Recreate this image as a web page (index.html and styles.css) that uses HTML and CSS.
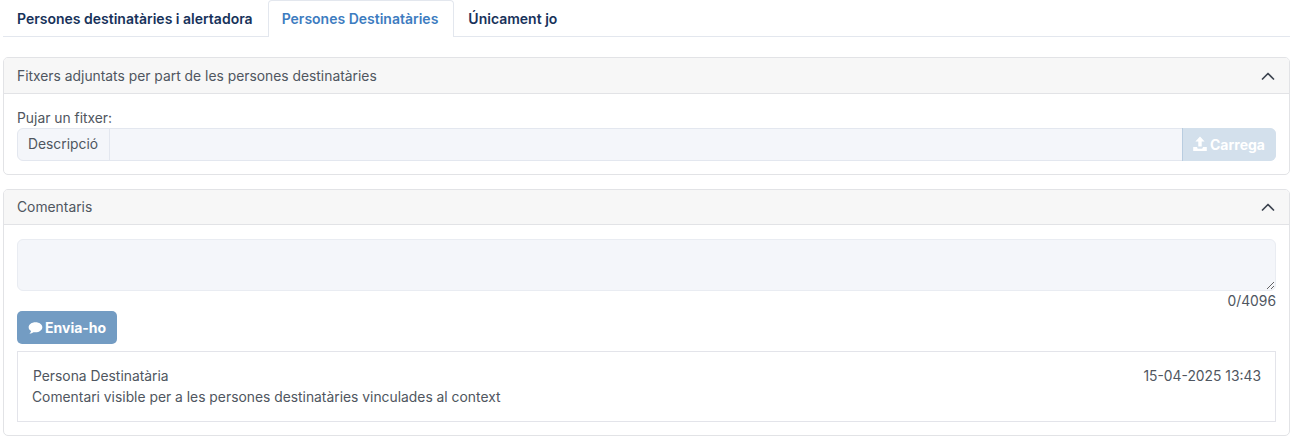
FILE: index.html
```html
<!DOCTYPE html>
<html lang="ca">
<head>
<meta charset="utf-8">
<title>Comentaris</title>
<link rel="stylesheet" href="styles.css">
</head>
<body>
<nav class="tabs">
  <a class="tab">Persones destinatàries i alertadora</a>
  <a class="tab active">Persones Destinatàries</a>
  <a class="tab">Únicament jo</a>
</nav>
<section class="card card-files">
  <header class="card-head">
    <span>Fitxers adjuntats per part de les persones destinatàries</span>
    <svg class="chev" viewBox="0 0 14 8" width="14" height="8"><path d="M1.5 7 7 1.5 12.5 7" fill="none" stroke="#3d4450" stroke-width="1.7" stroke-linecap="round" stroke-linejoin="round"/></svg>
  </header>
  <div class="card-body">
    <label class="upload-label">Pujar un fitxer:</label>
    <div class="input-group">
      <span class="addon">Descripció</span>
      <span class="field"></span>
      <button class="btn-upload">
        <svg viewBox="0 0 16 16" width="16" height="16"><path fill="#fff" d="M8 .6 12.6 5.6H9.7V10.5H6.3V5.6H3.4ZM1.2 11H5.2V11.8C5.2 12.3 5.6 12.7 6.1 12.7H9.9C10.4 12.7 10.8 12.3 10.8 11.8V11H14.8V15H1.2Z"/></svg>
        Carrega
      </button>
    </div>
  </div>
</section>
<section class="card card-comments">
  <header class="card-head">
    <span>Comentaris</span>
    <svg class="chev" viewBox="0 0 14 8" width="14" height="8"><path d="M1.5 7 7 1.5 12.5 7" fill="none" stroke="#3d4450" stroke-width="1.7" stroke-linecap="round" stroke-linejoin="round"/></svg>
  </header>
  <div class="card-body comments-body">
    <textarea class="comment-input"></textarea>
    <div class="counter">0/4096</div>
    <button class="btn-send">
      <svg viewBox="0 0 16 14" width="15" height="14"><path fill="#fff" d="M8 .8C3.9.8.7 3.2.7 6.2c0 1.7 1 3.1 2.6 4.1-.2 1-.8 1.9-1.7 2.7 1.6-.1 3.1-.7 4.2-1.6.7.1 1.4.2 2.2.2 4.1 0 7.3-2.4 7.3-5.4S12.1.8 8 .8Z"/></svg>
      Envia-ho
    </button>
    <article class="comment">
      <div class="comment-meta">
        <span class="author">Persona Destinatària</span>
        <span>15-04-2025 13:43</span>
      </div>
      <p class="comment-text">Comentari visible per a les persones destinatàries vinculades al context</p>
    </article>
  </div>
</section>
</body>
</html>
```
FILE: styles.css
```css
* { box-sizing: border-box; }
html, body { margin: 0; padding: 0; }
body {
  width: 1299px;
  height: 445px;
  overflow: hidden;
  padding: 0 9px 0 3px;
  background: #fff;
  color: #4f5660;
  font-family: Inter, "Liberation Sans", sans-serif;
  font-size: 13.85px;
  line-height: 20px;
}
.tabs {
  display: flex;
  height: 37px;
  border-bottom: 1px solid #e3e7ee;
}
.tab {
  height: 37px;
  padding: 8px 14px 0 13px;
  border: 1px solid transparent;
  border-bottom: 0;
  border-radius: 4px 4px 0 0;
  color: #17325a;
  font-weight: 600;
  font-size: 14px;
  white-space: nowrap;
}
.tab.active {
  padding-right: 15px;
  background: #fff;
  border-color: #e3e7ee;
  color: #3d7cc0;
}
.card {
  border: 1px solid #e2e3e6;
  border-radius: 5px;
  background: #fff;
}
.card-files { margin-top: 20px; height: 118px; }
.card-comments { margin-top: 14px; height: 247px; }
.card-head {
  display: flex;
  align-items: center;
  justify-content: space-between;
  height: 36px;
  padding: 0 14px 0 13px;
  background: #f7f7f7;
  border-bottom: 1px solid #e2e3e6;
  border-radius: 4px 4px 0 0;
}
.card-comments .card-head { height: 35px; }
.chev { flex: none; }
.card-body { padding: 14px 13px 0; }
.upload-label { display: block; height: 20px; }
.input-group {
  display: flex;
  height: 33px;
  background: #f4f6fa;
  border: 1px solid #e3e7ef;
  border-radius: 6px;
}
.addon {
  flex: none;
  width: 92px;
  padding: 5px 0 0 10px;
  border-right: 1px solid #e3e7ef;
}
.field { flex: 1; }
.btn-upload {
  display: flex;
  align-items: center;
  justify-content: center;
  gap: 2px;
  flex: none;
  width: 94px;
  height: 33px;
  margin: -1px -1px -1px 0;
  padding: 0 2px 1px 0;
  border: 0;
  border-left: 1px solid #b9cde0;
  border-radius: 0 6px 6px 0;
  background: #d3e0ec;
  color: #fff;
  font: 700 14px Inter, "Liberation Sans", sans-serif;
}
.comments-body { padding-top: 14px; }
.comment-input {
  display: block;
  width: 100%;
  height: 52px;
  background: #f4f6fa;
  border: 1px solid #e9ecf2;
  border-radius: 6px;
  outline: 0;
  resize: vertical;
}
.counter { height: 20px; text-align: right; }
.btn-send {
  display: flex;
  align-items: center;
  gap: 2px;
  width: 100px;
  height: 33px;
  padding: 0 0 0 11px;
  border: 0;
  border-radius: 5px;
  background: #739cc3;
  color: #fff;
  font: 700 14px Inter, "Liberation Sans", sans-serif;
}
.comment {
  height: 71px;
  margin-top: 7px;
  padding: 14px 14px 0 14px;
  border: 1px solid #e3e4ea;
}
.comment-meta {
  display: flex;
  justify-content: space-between;
}
.author { padding-left: 1px; }
.comment-text { margin: 1px 0 0; }
```
